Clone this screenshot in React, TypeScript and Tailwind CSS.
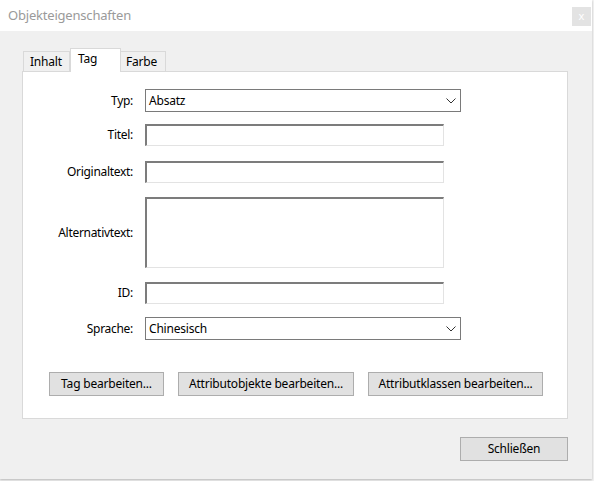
import React from 'react';

const font = { fontFamily: '"Noto Sans", "Open Sans", sans-serif' };

const Chevron = () => (
  <svg width="10" height="6" viewBox="0 0 10 6" className="absolute right-[4px] top-1/2 -translate-y-1/2">
    <path d="M0.5 0.5 L5 5 L9.5 0.5" fill="none" stroke="#333" strokeWidth="1" />
  </svg>
);

const Select = ({ value }: { value: string }) => (
  <div className="relative w-[316px] h-[23px] border border-[#7a7a7a] bg-white flex items-center pl-[3px] text-[12px] tracking-[-0.2px] text-black">
    {value}
    <Chevron />
  </div>
);

const Field = ({ h = 22 }: { h?: number }) => (
  <div
    className={`w-[299px] bg-white border-t-2 border-l-2 border-t-[#7c7c7c] border-l-[#7c7c7c] border-r border-b border-r-[#e3e3e3] border-b-[#e3e3e3] ${h === 22 ? 'h-[22px]' : 'h-[71px]'}`}
  />
);

const Row = ({ label, children, mt }: { label: string; children: React.ReactNode; mt: string }) => (
  <div className={`flex items-center ${mt}`}>
    <div className="w-[110px] text-right text-[12px] tracking-[-0.3px] text-black">{label}</div>
    <div className="ml-[12px]">{children}</div>
  </div>
);

const Btn = ({ children, w }: { children: React.ReactNode; w: string }) => (
  <div className={`${w} h-[24px] bg-[#e1e1e1] border border-[#adadad] flex items-center justify-center text-[12px] tracking-[-0.2px] text-black`}>
    {children}
  </div>
);

export default function App() {
  return (
    <div className="w-[594px] h-[481px] bg-[#f2f2f2] overflow-hidden" style={font}>
      <div className="w-[592px] h-[479px] bg-[#f0f0f0] flex flex-col shadow-[0_1px_2px_rgba(0,0,0,0.25)]">
        {/* Title bar */}
        <div className="h-[31px] bg-white flex items-center justify-between pl-[8px] pr-[1px] pt-px">
          <span className="text-[13px] tracking-[-0.2px] text-[#9a9a9a]">Objekteigenschaften</span>
          <div className="w-[19px] h-[19px] bg-[#e3e3e3] flex items-center justify-center text-[11px] text-white leading-none pb-[2px]">x</div>
        </div>

        <div className="pl-[22px] pt-[17px]">
          {/* Tabs */}
          <div className="flex items-end h-[23px] pl-px">
            <div className="w-[47px] h-[20px] bg-[#f0f0f0] border border-b-0 border-[#d9d9d9] text-[12px] tracking-[-0.2px] text-black pl-[6px] flex items-center">Inhalt</div>
            <div className="relative z-10 -mb-px w-[51px] h-[24px] bg-white border border-b-0 border-[#d9d9d9] text-[12px] tracking-[-0.2px] text-black pl-[7px] pt-[1px]">Tag</div>
            <div className="w-[45px] h-[20px] bg-[#f0f0f0] border border-b-0 border-l-0 border-[#d9d9d9] text-[12px] tracking-[-0.2px] text-black pl-[5px] flex items-center">Farbe</div>
          </div>

          {/* Panel */}
          <div className="w-[546px] h-[348px] bg-white border border-[#d9d9d9] pt-[17px] flex flex-col">
            <Row label="Typ:" mt="mt-0"><Select value="Absatz" /></Row>
            <Row label="Titel:" mt="mt-[12px]"><Field /></Row>
            <Row label="Originaltext:" mt="mt-[15px]"><Field /></Row>
            <Row label="Alternativtext:" mt="mt-[14px]"><Field h={71} /></Row>
            <Row label="ID:" mt="mt-[14px]"><Field /></Row>
            <Row label="Sprache:" mt="mt-[13px]"><Select value="Chinesisch" /></Row>

            <div className="flex gap-[14px] pl-[26px] mt-[32px]">
              <Btn w="w-[115px]">Tag bearbeiten...</Btn>
              <Btn w="w-[176px]">Attributobjekte bearbeiten...</Btn>
              <Btn w="w-[175px]">Attributklassen bearbeiten...</Btn>
            </div>
          </div>

          <div className="flex justify-end w-[546px] mt-[18px]">
            <Btn w="w-[108px]">Schließen</Btn>
          </div>
        </div>
      </div>
    </div>
  );
}
